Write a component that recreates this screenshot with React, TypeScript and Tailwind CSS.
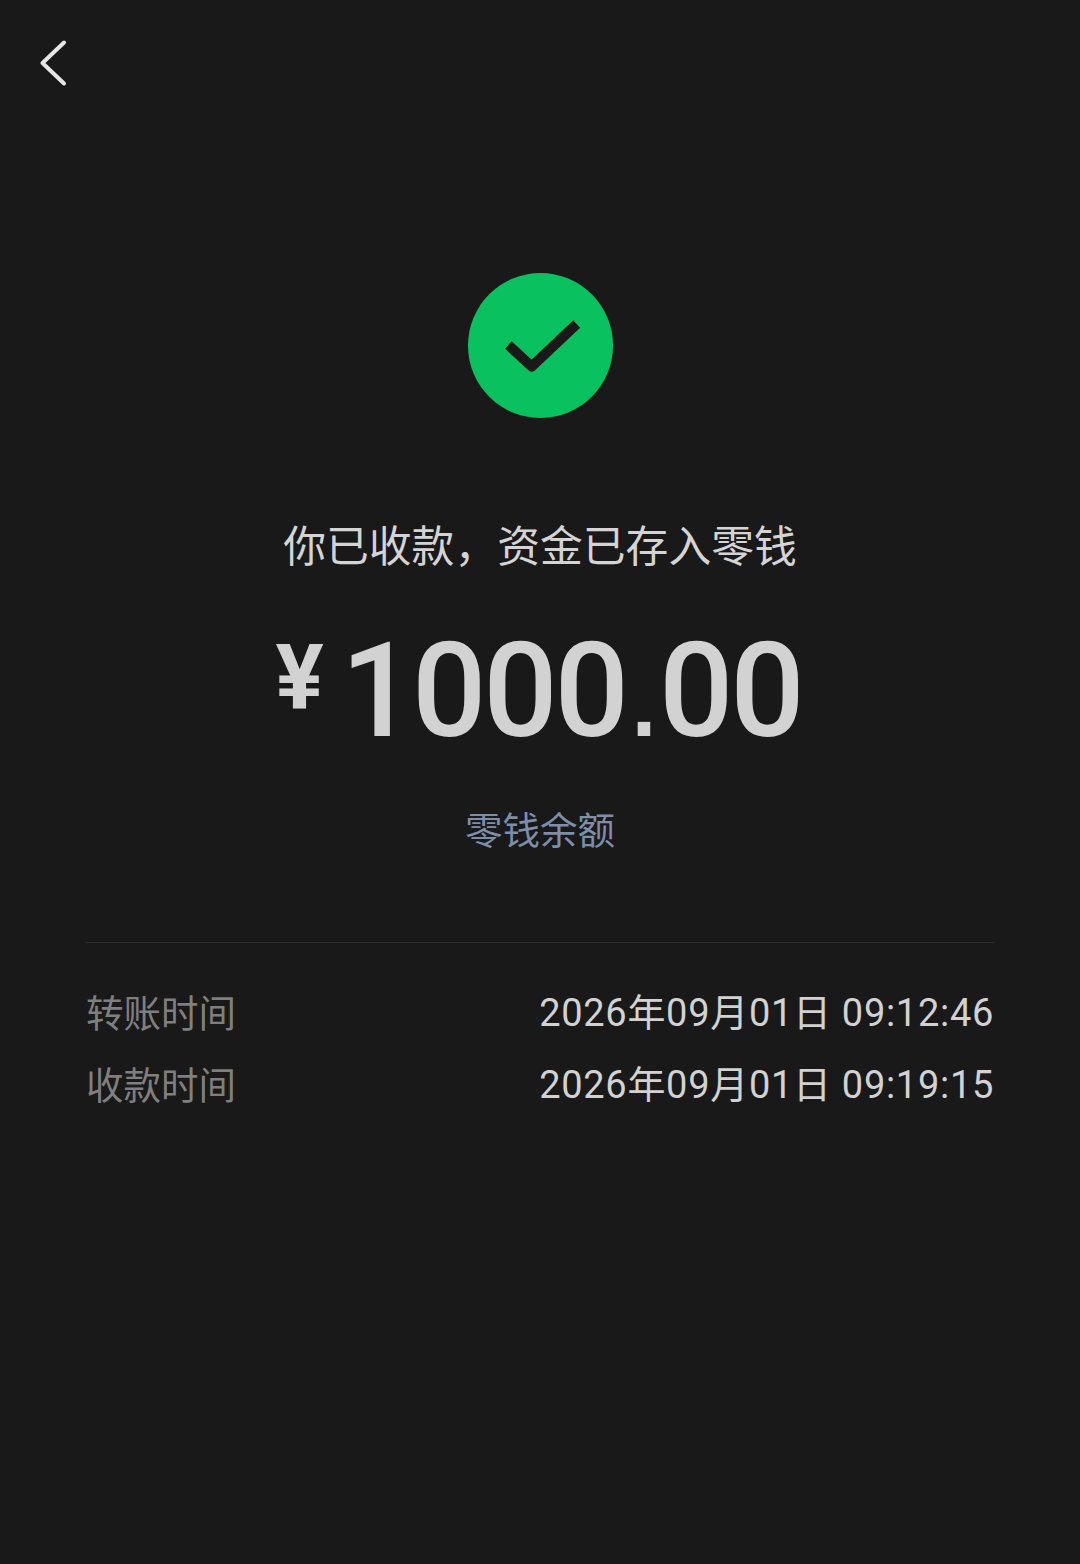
const cjk = "font-['Noto_Sans_CJK_SC',sans-serif]";

function Row({ label, value }: { label: string; value: string }) {
  return (
    <div className="flex h-[72px] items-center justify-between">
      <span className="pb-1 font-['Noto_Sans_CJK_SC',sans-serif] text-[37.500px] font-normal leading-none text-[#7f7f7f]">{label}</span>
      <span className="font-['Roboto','Noto_Sans_CJK_SC',sans-serif] text-[38px] font-normal leading-none tracking-[0.7px] text-[#d2d2d2]">{value}</span>
    </div>
  );
}

export default function App() {
  return (
    <div className="flex h-[1564px] w-[1080px] flex-col overflow-hidden bg-[#191919]">
      {/* Top bar */}
      <div className="flex h-[126px] items-start pl-[38px] pt-[39px]">
        <svg width="30" height="48" viewBox="0 0 30 48" fill="none">
          <path d="M26 3.500 4.500 24 26 44.500" stroke="#e6e6e6" strokeWidth="4" strokeLinecap="round" strokeLinejoin="round" />
        </svg>
      </div>

      <div className="flex flex-col items-center pt-[147px]">
        <div className="ml-px flex h-[145px] w-[145px] items-center justify-center rounded-full bg-[#0ac160]">
          <svg width="145" height="145" viewBox="0 0 145 145" fill="none">
            <path d="M40.300 72 L63.700 93.500 L108.700 51" stroke="#191919" strokeWidth="10" strokeLinejoin="round" />
          </svg>
        </div>

        <h1 lang="zh-CN" className={`${cjk} mt-[94px] text-[42.800px] font-normal leading-[62px] text-[#d4d4d4]`}>{"你已收款\uFF0C资金已存入零钱"}</h1>

        {/* Amount */}
        <div className="-ml-[3px] mt-[47px] flex h-[140px] items-center font-['Roboto',sans-serif] font-medium text-[#d2d2d2]">
          <span className="mr-[17px] -translate-y-[12px] text-[90px] font-bold leading-none">¥</span>
          <span className="text-[131px] leading-none tracking-[-3.200px]">
            1000<span className="font-['Liberation_Sans',sans-serif]">.</span>00
          </span>
        </div>

        <div className={`${cjk} mt-[41px] text-[37.500px] font-normal leading-[52px] text-[#7d8fa8]`}>零钱余额</div>
      </div>

      {/* Details */}
      <div className="mx-[86px] mt-[88px] border-t border-[#2d2d2d] pt-[34px]">
        <Row label="转账时间" value="2026年09月01日 09:12:46" />
        <Row label="收款时间" value="2026年09月01日 09:19:15" />
      </div>
    </div>
  );
}
